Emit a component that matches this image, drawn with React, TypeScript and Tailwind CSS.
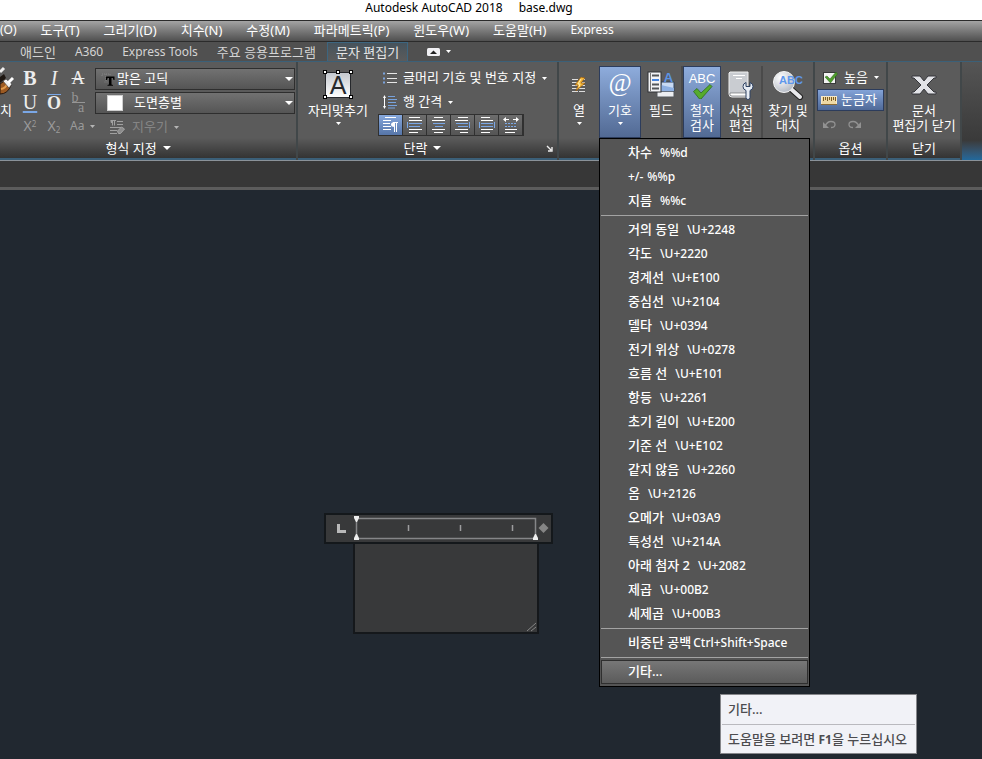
import type { ReactNode } from "react";

type SymbolItem = {
  label: string;
  code: string;
};

const menuItems = [
  "(O)",
  "도구(T)",
  "그리기(D)",
  "치수(N)",
  "수정(M)",
  "파라메트릭(P)",
  "윈도우(W)",
  "도움말(H)",
  "Express",
];

const tabs = ["애드인", "A360", "Express Tools", "주요 응용프로그램"];

const basicSymbols: SymbolItem[] = [
  { label: "차수", code: "%%d" },
  { label: "+/-", code: "%%p" },
  { label: "지름", code: "%%c" },
];

const unicodeSymbols: SymbolItem[] = [
  { label: "거의 동일", code: "\\U+2248" },
  { label: "각도", code: "\\U+2220" },
  { label: "경계선", code: "\\U+E100" },
  { label: "중심선", code: "\\U+2104" },
  { label: "델타", code: "\\U+0394" },
  { label: "전기 위상", code: "\\U+0278" },
  { label: "흐름 선", code: "\\U+E101" },
  { label: "항등", code: "\\U+2261" },
  { label: "초기 길이", code: "\\U+E200" },
  { label: "기준 선", code: "\\U+E102" },
  { label: "같지 않음", code: "\\U+2260" },
  { label: "옴", code: "\\U+2126" },
  { label: "오메가", code: "\\U+03A9" },
  { label: "특성선", code: "\\U+214A" },
  { label: "아래 첨자 2", code: "\\U+2082" },
  { label: "제곱", code: "\\U+00B2" },
  { label: "세제곱", code: "\\U+00B3" },
];

const Caret = ({ big = false, dim = false }: { big?: boolean; dim?: boolean }) => (
  <svg
    viewBox="0 0 8 4"
    className={`shrink-0 ${big ? "h-1 w-2" : "h-[3px] w-[5px]"} ${dim ? "text-[#b5b5b5]" : "text-white"}`}
    fill="currentColor"
    preserveAspectRatio="none"
  >
    <path d="M0 0h8L4 4z" />
  </svg>
);

const BrushIcon = () => (
  <svg width="14" height="34" viewBox="0 0 14 34">
    <path d="M0 6l4-4" stroke="#eee" strokeWidth="3" />
    <path d="M0 11l4-3 2 4-6 5z" fill="#1e1712" />
    <path d="M0 18q4-2 5-5l6 6q-3 9-11 9z" fill="#9c5a22" stroke="#2a1a10" />
    <path d="M1 23q5-1 6-5" stroke="#e39b4c" fill="none" strokeWidth="2" />
    <path d="M3 15l3-2 6 5-3 4z" fill="#f1f1f1" stroke="#333" strokeWidth=".6" />
    <path d="M8 17l5-5" stroke="#fff" strokeWidth="3" />
  </svg>
);

const FontIcon = () => (
  <svg width="14" height="13" viewBox="0 0 14 13">
    <path d="M1 3V1h8v2M5 1v8M3.500 9h3" stroke="#858585" strokeDasharray="1 1" fill="none" />
    <path d="M5 3.500h8.500V7h-1l-.6-2h-1.400v6.500l1.500.5v.8H6.500V12l1.500-.5V5H6.600L6 7H5z" fill="#000" />
  </svg>
);

const ClearIcon = () => (
  <svg width="17" height="16" viewBox="0 0 17 16" fill="none" stroke="#a0a0a0">
    <path d="M3.500 1.500v5M5.500 1.500v5M1.500 1.500H7M8 2.500h6M8 5.500h6M1 8.500h11M1 11.500h7M1 14.500h7" />
    <path d="M2 1h2v3H2q-1-1.500 0-3z" fill="#a0a0a0" stroke="none" />
    <path d="M8.500 12l4-4 3 2-4 4.500h-2z" fill="#8c8c8c" stroke="#a5a5a5" />
  </svg>
);

const JustifyIcon = () => (
  <svg width="30" height="30" viewBox="0 0 30 30">
    <defs>
      <linearGradient id="paper" x1="0" y1="0" x2="0" y2="1">
        <stop stopColor="#c3c7cd" />
        <stop offset="1" stopColor="#fff" />
      </linearGradient>
    </defs>
    <rect x="2.500" y="2.500" width="25" height="25" fill="url(#paper)" stroke="#26282c" />
    <text x="15" y="24" textAnchor="middle" fontSize="25" fill="#26282c" fontFamily="Liberation Sans, sans-serif">
      A
    </text>
    <g fill="#fff" stroke="#000">
      <rect x=".5" y=".5" width="3" height="3" />
      <rect x="13.500" y=".5" width="3" height="3" />
      <rect x="26.500" y=".5" width="3" height="3" />
      <rect x=".5" y="25.500" width="3" height="3" />
      <rect x="26.500" y="25.500" width="3" height="3" />
    </g>
  </svg>
);

const BulletsIcon = () => (
  <svg width="14" height="12" viewBox="0 0 14 12">
    <path d="M0 1.500h2M0 6.500h2M0 10.500h2" stroke="#7ba3dd" strokeWidth="2" />
    <path d="M4 1.500h10M4 6.500h10M4 10.500h10" stroke="#e6e6e6" />
  </svg>
);

const SpacingIcon = () => (
  <svg width="14" height="14" viewBox="0 0 14 14">
    <path d="M1.500 2v10" stroke="#fff" />
    <path d="M0 3l1.500-3L3 3zM0 11l1.500 3L3 11z" fill="#fff" />
    <path d="M5 1.500h7M5 4.500h9M5 7.500h8M5 10.500h9M5 13h7" stroke="#78a3de" />
  </svg>
);

const alignIcons: { name: string; art: ReactNode }[] = [
  {
    name: "기본값",
    art: (
      <>
        <path d="M2 .500h11M0 3.500h8M0 6.500h7M0 9.500h8M0 12.500h8" stroke="#fff" />
        <path d="M11.500 5v10M13.500 5v10M10 5.500h5" stroke="#fff" />
        <path d="M12 5v5q-4 0-4-2.500T12 5z" fill="#fff" />
      </>
    ),
  },
  {
    name: "왼쪽",
    art: (
      <>
        <path d="M2 .500h11M2 3.500h13M2 12.500h13M2 15.500h9" stroke="#fff" />
        <path d="M.5 5v6M2 6.500h13M2 9.500h11" stroke="#7aa7e6" />
      </>
    ),
  },
  {
    name: "중심",
    art: (
      <>
        <path d="M3 .500h9M1 3.500h13M1 12.500h13M3 15.500h9" stroke="#fff" />
        <path d="M2 6.500h12M4 9.500h8" stroke="#7aa7e6" />
      </>
    ),
  },
  {
    name: "오른쪽",
    art: (
      <>
        <path d="M3 .500h10M0 3.500h13M0 12.500h13M5 15.500h8" stroke="#fff" />
        <path d="M14.500 5v6M1 6.500h12M3 9.500h10" stroke="#7aa7e6" />
      </>
    ),
  },
  {
    name: "자리맞추기",
    art: (
      <>
        <path d="M2 .500h9M2 3.500h12M2 12.500h12M2 15.500h9" stroke="#fff" />
        <path d="M.5 5v6M15.500 5v6M2 6.500h12M2 9.500h12" stroke="#7aa7e6" />
      </>
    ),
  },
  {
    name: "분산",
    art: (
      <>
        <path d="M1 2.500h5M10 2.500h5M2 12.500h12M2 15.500h10" stroke="#fff" />
        <path d="M0 2.500L3 0v5zM16 2.500L13 0v5z" fill="#fff" />
        <path d="M2 6.500h12M2 9.500h12" stroke="#7aa7e6" strokeDasharray="2 1" />
      </>
    ),
  },
];

const ColumnsIcon = () => (
  <svg width="16" height="16" viewBox="0 0 16 16">
    <path d="M1 2.500h14M1 5.500h14M1 8.500h14M1 11.500h14M1 14.500h14" stroke="#ddd" strokeDasharray="6 1" />
    <path d="M10 0L4 8h3l-2 6 9-8h-4l4-5z" fill="#f4b63a" stroke="#8f5610" strokeWidth=".7" />
    <path d="M10 2L7 7h2l-1 3" stroke="#fff0ae" fill="none" />
  </svg>
);

const AtIcon = () => (
  <svg width="28" height="28" viewBox="0 0 28 28">
    <text x="14" y="20" textAnchor="middle" fontSize="25" fontStyle="italic" fill="#fff" fontFamily="Liberation Serif, serif">
      @
    </text>
  </svg>
);

const FieldIcon = () => (
  <svg width="28" height="28" viewBox="0 0 28 28">
    <path d="M10 20h17v6H10z" fill="#eceef1" stroke="#55585c" />
    <path d="M14 11h13v9H14z" fill="#c8daf3" stroke="#31435c" />
    <path d="M14 14v6h13v-3z" fill="#8db0e2" />
    <rect x="1" y="1" width="13" height="20" fill="#f3f4f6" stroke="#303236" />
    <path d="M3.500 2v18" stroke="#777" />
    <path d="M5 4.500h7M5 13.500h7M5 17.500h7" stroke="#53565a" strokeWidth="2" />
    <path d="M5 9h7" stroke="#4484de" strokeWidth="2" />
    <text x="21.500" y="10.500" textAnchor="middle" fontSize="13" fontWeight="bold" fill="#5b94e5" fontFamily="Liberation Sans, sans-serif">
      A
    </text>
  </svg>
);

const SpellIcon = () => (
  <svg width="30" height="28" viewBox="0 0 30 28">
    <text x="15" y="12" textAnchor="middle" fontSize="13" fill="#fff" fontFamily="Liberation Sans, sans-serif">
      ABC
    </text>
    <path d="M6.500 20.500l3.500-3 4 4.500 9-8.500 2 2-11 12.500h-1.500z" fill="#56ab2c" stroke="#2d6c1d" strokeWidth=".8" />
  </svg>
);

const DictionaryIcon = () => (
  <svg width="26" height="29" viewBox="0 0 26 29">
    <path d="M2 1h18v25H4q-3 0-3-3V2z" fill="#c9ccd1" stroke="#f0f0f0" />
    <path d="M2 22h18v3H4q-3 0-2-3z" fill="#fff" stroke="#5b5e62" strokeWidth=".6" />
    <path d="M5 4.500h12M8 7.500h6" stroke="#fff" />
    <path
      d="M18 11.500q-3 1-3 4t3 4v7q0 2 2 2t2-2v-7q3-1 3-4t-3-4v4h-4z"
      fill="#e7edf5"
      stroke="#2f4263"
      strokeLinejoin="round"
    />
  </svg>
);

const FindIcon = () => (
  <svg width="32" height="30" viewBox="0 0 32 30">
    <defs>
      <radialGradient id="lens" cx=".35" cy=".3" r=".8">
        <stop stopColor="#fff" />
        <stop offset="1" stopColor="#aeb4bf" />
      </radialGradient>
    </defs>
    <path d="M20 20l8 7" stroke="#222" strokeWidth="6" strokeLinecap="round" />
    <path d="M19 19l9 8" stroke="#e9e9ec" strokeWidth="4" strokeLinecap="round" />
    <circle cx="12" cy="12" r="10.500" fill="url(#lens)" stroke="#f4f4f4" />
    <text x="19" y="14" textAnchor="middle" fontSize="11" fontWeight="bold" fill="#5f98ec" fontFamily="Liberation Sans, sans-serif">
      ABC
    </text>
  </svg>
);

const CheckIcon = () => (
  <svg width="15" height="14" viewBox="0 0 15 14">
    <rect x=".5" y="1.500" width="12" height="11" fill="#f2f2f2" stroke="#3a3a3a" />
    <path d="M2 6l2-1 3 3 6-7 1.500 2L7.500 12z" fill="#4f9c2c" stroke="#2b651a" strokeWidth=".5" />
  </svg>
);

const RulerIcon = () => (
  <svg width="16" height="9" viewBox="0 0 16 9">
    <rect x=".5" y=".5" width="15" height="8" fill="#efd9a4" stroke="#f6e9c9" />
    <path d="M2.500 1v4M4.500 1v3M6.500 1v4M8.500 1v3M10.500 1v4M12.500 1v3M14.500 1v4" stroke="#7a5c22" />
    <path d="M0 8.500h16" stroke="#8b6b35" />
  </svg>
);

const UndoIcon = ({ flip = false }: { flip?: boolean }) => (
  <svg width="13" height="9" viewBox="0 0 13 9" className={flip ? "-scale-x-100" : ""}>
    <path d="M2 6.500Q4 1.500 8 1.500q4 0 4 3 0 3-4 3" stroke="#919191" fill="none" strokeWidth="1.300" />
    <path d="M0 2v6h6z" fill="#919191" />
  </svg>
);

const CloseIcon = () => (
  <svg width="26" height="20" viewBox="0 0 26 20">
    <path
      d="M1 1h8l4 5 4-5h8v2h-2l-7 7 7 7h2v2h-8l-4-5-4 5H1v-2h2l7-7-7-7H1z"
      fill="#e2e3e7"
      stroke="#34353a"
    />
  </svg>
);

const Panel = ({
  title,
  className = "",
  children,
}: {
  title?: ReactNode;
  className?: string;
  children: ReactNode;
}) => (
  <section
    className={`flex shrink-0 flex-col border-r-2 border-[#414749] bg-[#5b5b5b] ${className}`}
  >
    <div className="flex h-[76px] pt-1">{children}</div>
    <div className="flex h-[22px] items-center justify-center gap-1.5 border-b-2 border-[#3b5f78] bg-linear-to-b from-[#5b5b5b] to-[#343434] leading-5">
      {title}
    </div>
  </section>
);

const BigButton = ({
  icon,
  lines,
  caret = false,
  active = false,
  className = "",
}: {
  icon: ReactNode;
  lines: string[];
  caret?: boolean;
  active?: boolean;
  className?: string;
}) => (
  <button
    type="button"
    className={`flex h-[72px] shrink-0 flex-col items-center border ${
      active
        ? "border-[#2c3c5c] bg-linear-to-b from-[#8eacdc] to-[#526a94]"
        : "border-transparent"
    } ${className}`}
  >
    <span className="flex h-9 items-center justify-center">{icon}</span>
    {lines.map((line) => (
      <span key={line} className="leading-[15px] whitespace-nowrap">
        {line}
      </span>
    ))}
    {caret && (
      <span className="mt-1">
        <Caret />
      </span>
    )}
  </button>
);

const FormatButton = ({ label, children }: { label: string; children: ReactNode }) => (
  <button
    type="button"
    aria-label={label}
    className="flex h-6 w-6 items-center justify-center font-['Liberation_Serif',serif] text-xl leading-6 text-[#ededed]"
  >
    {children}
  </button>
);

const Combo = ({ label, value, icon, pad }: { label: string; value: string; icon: ReactNode; pad: string }) => (
  <div className="relative">
    <select
      aria-label={label}
      className={`block h-[22px] w-full appearance-none border border-[#2e2e2e] bg-linear-to-b from-[#727272] to-[#555] pb-0.5 text-[13px] leading-4 text-white ${pad}`}
    >
      <option>{value}</option>
    </select>
    <span className="pointer-events-none absolute inset-y-0 left-0 flex items-center">{icon}</span>
    <span className="pointer-events-none absolute inset-y-0 right-0.5 flex items-center">
      <Caret big />
    </span>
  </div>
);

const SymbolRow = ({ label, code }: SymbolItem) => (
  <li>
    <button
      type="button"
      className={`flex h-6 w-full items-center pl-[27px] ${label === "+/-" ? "gap-1 text-xs" : "gap-2"}`}
    >
      {label}
      <span className="text-xs">{code}</span>
    </button>
  </li>
);

const SymbolMenu = () => (
  <div className="absolute top-[72px] left-0 z-10 w-[211px] border border-black bg-[#555] px-px pt-0.5 pb-0.5 font-medium text-white">
    <ul>
      {basicSymbols.map((item) => (
        <SymbolRow key={item.code} {...item} />
      ))}
    </ul>
    <hr className="mt-0.5 mb-0.5 border-[#a3a3a3]" />
    <ul>
      {unicodeSymbols.map((item) => (
        <SymbolRow key={item.code} {...item} />
      ))}
    </ul>
    <hr className="mt-0.5 mb-0.5 border-[#a3a3a3]" />
    <button type="button" className="flex h-6 w-full items-center gap-0.5 pl-[27px]">
      비중단 공백 <span className="text-xs">Ctrl+Shift+Space</span>
    </button>
    <hr className="mt-0.5 mb-0.5 border-[#a3a3a3]" />
    <button
      type="button"
      className="flex h-6 w-full items-center border border-[#2f2f2f] bg-linear-to-b from-[#777] to-[#5b5b5b] pl-[26px]"
    >
      기타...
    </button>
    <div
      role="tooltip"
      className="absolute top-full left-[120px] mt-2 w-[197px] border border-[#85868a] bg-[#f1f2f7] px-px whitespace-nowrap text-[#4c4c4f]"
    >
      <p className="h-[29px] px-1.5 leading-7">기타...</p>
      <p className="h-[29px] border-t border-[#b9b9be] px-1.5 leading-7">
        도움말을 보려면 <b className="text-xs">F1</b>을 누르십시오
      </p>
    </div>
  </div>
);

const Ribbon = () => (
  <div className="flex border-t border-b border-t-[#3b6078] border-b-[#8a9299] bg-linear-to-b from-[#555] via-[#3a3a3a] via-80% to-[#21699c] text-white">
    <Panel
      title={
        <span className="flex items-center gap-1.5 pr-5">
          형식 지정 <Caret big />
        </span>
      }
    >
      <div className="flex w-[18px] flex-col overflow-hidden">
        <BrushIcon />
        <span className="leading-5">치</span>
      </div>
      <div className="grid w-[77px] grid-cols-[24px_24px_29px] grid-rows-[24px_24px_24px]">
        <FormatButton label="굵게"><b>B</b></FormatButton>
        <FormatButton label="기울임꼴"><i>I</i></FormatButton>
        <FormatButton label="취소선"><s className="text-lg">A</s></FormatButton>
        <FormatButton label="밑줄">
          <span className="underline decoration-[#7aa7e6] underline-offset-2">U</span>
        </FormatButton>
        <FormatButton label="윗줄">
          <span className="border-t border-[#7aa7e6] text-lg leading-4 font-bold">O</span>
        </FormatButton>
        <FormatButton label="스택">
          <span className="flex flex-col text-sm leading-[9px] text-[#969696]">
            <span className="border-b border-[#969696] pr-1.5">b</span>
            <span className="pl-1.5">a</span>
          </span>
        </FormatButton>
        <button type="button" className="text-sm text-[#9a9a9a]">X<sup className="text-[8px]">2</sup></button>
        <button type="button" className="text-sm text-[#9a9a9a]">X<sub className="text-[8px]">2</sub></button>
        <button type="button" className="flex items-center gap-1.5 pl-1 text-xs text-[#9a9a9a]">
          Aa <Caret dim />
        </button>
      </div>
      <div className="flex w-[201px] flex-col gap-0.5 pt-0.5 pr-px">
        <Combo
          label="글꼴"
          value="맑은 고딕"
          pad="pl-[21px]"
          icon={<span className="pl-1.5"><FontIcon /></span>}
        />
        <Combo
          label="색상"
          value="도면층별"
          pad="pl-[38px]"
          icon={<span className="ml-3 h-4 w-4 border border-[#cfcfcf] bg-white" />}
        />
        <button type="button" className="flex h-6 items-center gap-1.5 pl-3.5 text-[#858585]">
          <ClearIcon /> 지우기 <Caret dim />
        </button>
      </div>
    </Panel>

    <Panel
      className="w-[261px]"
      title={
        <span className="relative flex w-full items-center justify-center gap-1.5 pr-2.5">
          단락 <Caret big />
          <svg className="absolute right-1 h-[7px] w-[7px]" viewBox="0 0 7 7" stroke="#eee" fill="none">
            <path d="M1 1l4 4M6 2v4H2" strokeWidth="1.400" />
          </svg>
        </span>
      }
    >
      <BigButton icon={<JustifyIcon />} lines={["자리맞추기"]} caret className="w-20" />
      <div className="flex flex-col">
        <button type="button" className="flex h-6 items-center gap-1.5 pl-[5px] whitespace-nowrap">
          <BulletsIcon /> 글머리 기호 및 번호 지정 <Caret />
        </button>
        <button type="button" className="flex h-6 items-center gap-1.5 pl-[5px]">
          <SpacingIcon /> 행 간격 <Caret />
        </button>
        <div className="flex w-fit border border-[#303030] bg-[#303030]">
          {alignIcons.map(({ name, art }, index) => (
            <button
              key={name}
              type="button"
              aria-label={name}
              className={`flex h-5 w-6 items-center justify-center border-r border-[#303030] bg-linear-to-b ${
                index === 0 ? "from-[#86a8dd] to-[#5675a8]" : "from-[#6d6d6d] to-[#555]"
              }`}
            >
              <svg width="16" height="16" viewBox="0 0 16 16" fill="none">
                {art}
              </svg>
            </button>
          ))}
        </div>
      </div>
    </Panel>

    <Panel>
      <BigButton icon={<ColumnsIcon />} lines={["열"]} caret className="w-10" />
      <div className="relative">
        <BigButton icon={<AtIcon />} lines={["기호"]} caret active className="w-[42px]" />
        <SymbolMenu />
      </div>
      <BigButton icon={<FieldIcon />} lines={["필드"]} className="w-10" />
      <div className="flex border-l-2 border-[#4a4a4a]">
        <BigButton icon={<SpellIcon />} lines={["철자", "검사"]} active className="w-[38px]" />
        <BigButton icon={<DictionaryIcon />} lines={["사전", "편집"]} className="w-10" />
      </div>
      <div className="flex border-l-2 border-[#4a4a4a]">
        <BigButton icon={<FindIcon />} lines={["찾기 및", "대치"]} className="w-[50px]" />
      </div>
    </Panel>

    <Panel title="옵션">
      <div className="flex w-[71px] flex-col px-0.5">
        <button type="button" className="flex h-6 items-center gap-1.5 pl-1.5 whitespace-nowrap">
          <CheckIcon /> 높음 <Caret />
        </button>
        <button
          type="button"
          className="flex h-[22px] items-center gap-1 border border-[#2c3c5c] bg-linear-to-b from-[#83a3d8] to-[#506a98] pl-[3px] whitespace-nowrap"
        >
          <RulerIcon /> 눈금자
        </button>
        <div className="flex h-7 items-center gap-3 pl-1.5">
          <button type="button" aria-label="명령 취소"><UndoIcon /></button>
          <button type="button" aria-label="명령 복구"><UndoIcon flip /></button>
        </div>
      </div>
    </Panel>

    <Panel title="닫기">
      <BigButton icon={<CloseIcon />} lines={["문서", "편집기 닫기"]} className="w-[72px]" />
    </Panel>
  </div>
);

const TextEditor = () => (
  <div className="absolute top-[323px] left-[324px] w-[229px]">
    <div className="flex h-[31px] items-center border-2 border-[#14181b] bg-[#38393a]">
      <svg width="225" height="27" viewBox="0 0 225 27" fill="none">
        <path d="M11 9h3v6h6v3h-9z" fill="#b9b9b9" />
        <path d="M30.500 3.500h179v20h-179z" stroke="#858688" strokeWidth="1.500" />
        <path d="M82.500 10v6M134.500 10v6M186.500 10v6" stroke="#9c9d9e" strokeWidth="1.500" />
        <path d="M28 1h5v2l-2 4h-1l-2-4zM28 25v-2l2-4h1l2 4v2zM207 25v-2l2-4h1l2 4v2z" fill="#eee" />
        <path d="M217.500 8l5 5-5 5-5-5z" fill="#858585" />
      </svg>
    </div>
    <div className="relative mr-3.5 ml-[29px]">
      <textarea
        aria-label="문자"
        className="block h-[90px] w-full resize-none border-2 border-t-0 border-[#15181b] bg-[#38393a] text-white outline-none"
      />
      <svg className="absolute right-0.5 bottom-0.5" width="10" height="10" viewBox="0 0 10 10" stroke="#868686">
        <path d="M0 9l9-8M4 9l5-4" />
      </svg>
    </div>
  </div>
);

const App = () => {
  return (
    <div className="flex min-h-screen flex-col overflow-hidden bg-[#212830] font-['Noto_Sans','Noto_Sans_CJK_KR',sans-serif] text-[13px]">
      <header className="flex h-5 justify-center gap-4 bg-white pr-11 text-xs leading-4 text-black">
        <h1>Autodesk AutoCAD 2018</h1>
        <span>base.dwg</span>
      </header>

      <nav className="flex h-[22px] items-center gap-6 border-y border-[#2b2b2b] bg-linear-to-b from-[#a4a4a4] to-[#505050] pb-0.5 leading-4 whitespace-nowrap text-white">
        {menuItems.map((item) => (
          <button key={item} type="button" className={item === "Express" || item === "(O)" ? "text-xs" : ""}>
            {item}
          </button>
        ))}
      </nav>

      <div role="tablist" className="flex h-[19px] items-center gap-[19px] bg-[#505050] pl-5 leading-[18px] whitespace-nowrap text-[#d4d4d4]">
        {tabs.map((tab) => (
          <button key={tab} type="button" role="tab" className={tab === "A360" || tab === "Express Tools" ? "text-xs" : ""}>
            {tab}
          </button>
        ))}
        <button
          type="button"
          role="tab"
          aria-selected="true"
          className="-ml-2 h-full border border-b-0 border-[#3d6680] bg-linear-to-b from-[#46535c] to-[#5b5b5b] px-2 text-[#e6e6e6]"
        >
          문자 편집기
        </button>
        <button type="button" aria-label="리본 최소화" className="flex items-center gap-1.5">
          <svg width="13" height="8" viewBox="0 0 13 8">
            <rect width="13" height="8" rx="1.500" fill="#f0f0f4" />
            <path d="M3 6l3.500-3.500L10 6z" fill="#222" />
          </svg>
          <Caret />
        </button>
      </div>

      <Ribbon />

      <div className="h-[29px] shrink-0 border-b-3 border-[#5c5c5c] bg-[#373737]" />
      <main className="relative flex-1">
        <TextEditor />
      </main>
    </div>
  );
};

export default App;
